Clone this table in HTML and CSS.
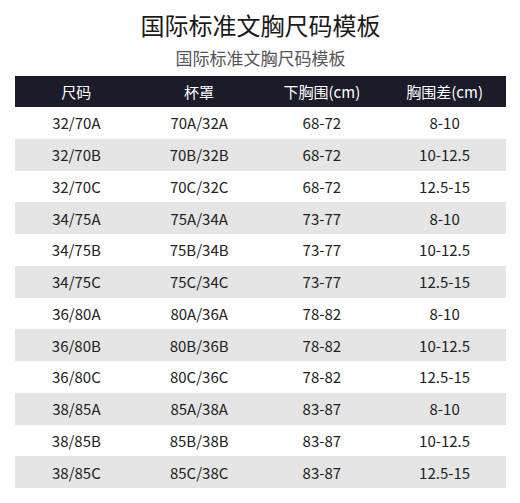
FILE: index.html
```html
<!DOCTYPE html>
<html lang="zh-CN">
<head>
<meta charset="utf-8">
<title>国际标准文胸尺码模板</title>
<link rel="stylesheet" href="styles.css">
</head>
<body>
<div class="page">
  <h1 class="title">国际标准文胸尺码模板</h1>
  <h2 class="subtitle">国际标准文胸尺码模板</h2>
  <div class="table">
    <div class="row head"><span>尺码</span><span>杯罩</span><span>下胸围(cm)</span><span>胸围差(cm)</span></div>
    <div class="row"><span>32/70A</span><span>70A/32A</span><span>68-72</span><span>8-10</span></div>
    <div class="row alt"><span>32/70B</span><span>70B/32B</span><span>68-72</span><span>10-12.5</span></div>
    <div class="row"><span>32/70C</span><span>70C/32C</span><span>68-72</span><span>12.5-15</span></div>
    <div class="row alt"><span>34/75A</span><span>75A/34A</span><span>73-77</span><span>8-10</span></div>
    <div class="row"><span>34/75B</span><span>75B/34B</span><span>73-77</span><span>10-12.5</span></div>
    <div class="row alt"><span>34/75C</span><span>75C/34C</span><span>73-77</span><span>12.5-15</span></div>
    <div class="row"><span>36/80A</span><span>80A/36A</span><span>78-82</span><span>8-10</span></div>
    <div class="row alt"><span>36/80B</span><span>80B/36B</span><span>78-82</span><span>10-12.5</span></div>
    <div class="row"><span>36/80C</span><span>80C/36C</span><span>78-82</span><span>12.5-15</span></div>
    <div class="row alt"><span>38/85A</span><span>85A/38A</span><span>83-87</span><span>8-10</span></div>
    <div class="row"><span>38/85B</span><span>85B/38B</span><span>83-87</span><span>10-12.5</span></div>
    <div class="row alt"><span>38/85C</span><span>85C/38C</span><span>83-87</span><span>12.5-15</span></div>
  </div>
</div>
</body>
</html>
```
FILE: styles.css
```css
html, body {
  margin: 0;
  padding: 0;
  background: #ffffff;
}
body {
  font-family: "Noto Sans CJK SC", "Noto Sans", sans-serif;
  color: #1f1f1f;
}
.page {
  width: 520px;
  padding: 9px 14px 0 15px;
  box-sizing: border-box;
}
.title {
  margin: 0;
  font-size: 24px;
  line-height: 32px;
  font-weight: 400;
  text-align: center;
  color: #1a1a1a;
}
.subtitle {
  margin: 5px 0 0;
  font-size: 17px;
  line-height: 24px;
  font-weight: 400;
  text-align: center;
  color: #555555;
}
.table {
  margin-top: 6px;
  display: flex;
  flex-direction: column;
}
.row {
  display: grid;
  grid-template-columns: repeat(4, 1fr);
  height: 31.75px;
  align-items: center;
  font-size: 15px;
  color: #222222;
}
.row span {
  text-align: center;
}
.row.head {
  height: 31px;
  background: #1b1b29;
  color: #ffffff;
}
.row.alt {
  background: #e5e5e5;
}
```
